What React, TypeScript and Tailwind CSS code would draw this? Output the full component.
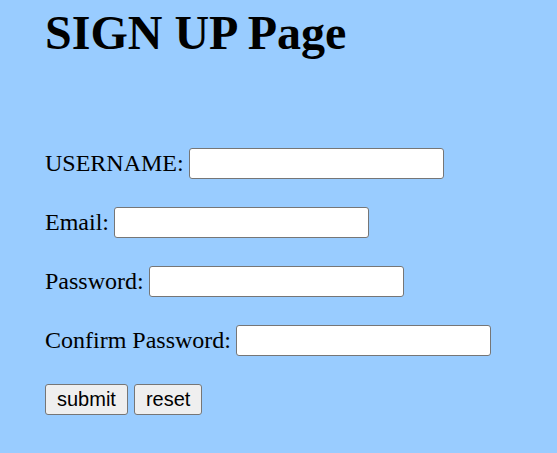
import React from 'react';

const fields = ['USERNAME', 'Email', 'Password', 'Confirm Password'];

export default function App() {
  return (
    <div className="min-h-screen bg-[#99ccff] pl-[45px] pt-[5px] text-black font-['Liberation_Serif',serif]">
      <h1 className="text-[48px] font-bold leading-[55px] m-0">SIGN UP Page</h1>

      <form className="mt-[88px] flex flex-col gap-[28px]" onSubmit={e => e.preventDefault()}>
        {fields.map(label => (
          <div key={label} className="flex items-center text-[24px] leading-[27px]">
            <label>{label}:</label>
            <input
              type={label.includes('Password') ? 'password' : 'text'}
              className="ml-[5px] h-[31px] w-[255px] bg-white border border-[#767676] rounded-[3px] px-1 outline-none"
            />
          </div>
        ))}

        <div className="flex gap-[6px] font-['Liberation_Sans',sans-serif] text-[20px]">
          <button
            type="submit"
            className="h-[31px] px-[11px] leading-[23px] bg-[#efefef] border border-[#767676] rounded-[3px]"
          >
            submit
          </button>
          <button
            type="reset"
            className="h-[31px] px-[11px] leading-[23px] bg-[#efefef] border border-[#767676] rounded-[3px]"
          >
            reset
          </button>
        </div>
      </form>
    </div>
  );
}
